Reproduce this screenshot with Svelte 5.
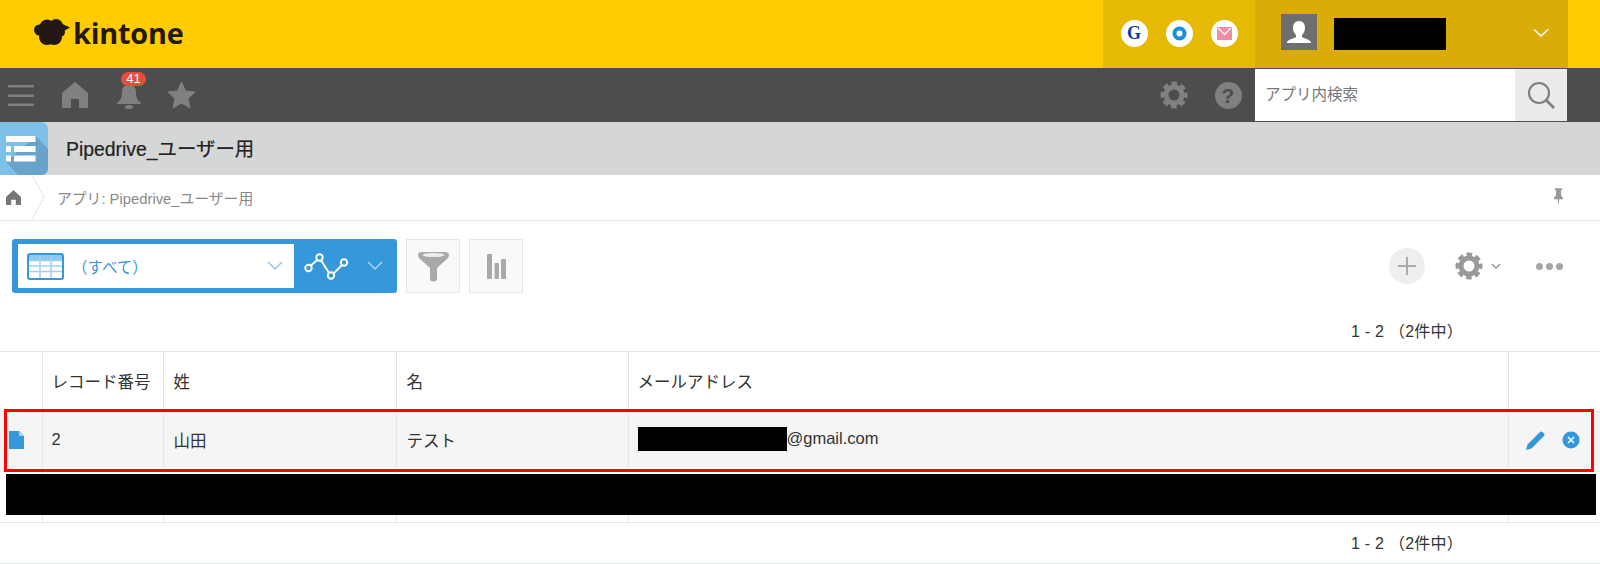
<script>
  const gray = "#808080";
  const columns = [
    { label: "", width: 42 },
    { label: "レコード番号", width: 121 },
    { label: "姓", width: 233 },
    { label: "名", width: 232 },
    { label: "メールアドレス", width: 880 },
    { label: "", width: 92 },
  ];
</script>

<div class="page">
  <header class="top">
    <div class="logo">
      <svg width="36" height="27" viewBox="0 0 36 27">
        <g fill="#231815">
          <circle cx="5.500" cy="11" r="5.500" />
          <circle cx="13" cy="8" r="7.500" />
          <circle cx="22" cy="7" r="7" />
          <circle cx="26" cy="13" r="5" />
          <circle cx="13" cy="18" r="8" />
          <circle cx="20" cy="18" r="8" />
          <path d="M24 3 L36 8.500 L26 14 Z" />
        </g>
      </svg>
      <span>kintone</span>
    </div>
    <div class="services">
      <div class="service">
        <span class="g">G</span>
      </div>
      <div class="service">
        <svg width="15" height="15" viewBox="0 0 15 15"><circle cx="7.500" cy="7.500" r="5" fill="none" stroke="#1a8fd6" stroke-width="4" /></svg>
      </div>
      <div class="service">
        <svg width="15" height="13" viewBox="0 0 15 13">
          <rect width="15" height="13" fill="#ef8ca2" />
          <path d="M1 1 L7.500 7.500 L14 1" fill="none" stroke="#fff" stroke-width="1.200" />
        </svg>
      </div>
    </div>
    <div class="user">
      <div class="avatar">
        <svg width="30" height="30" viewBox="0 0 30 30">
          <path d="M15 4c-4 0-6 3-6 7 0 3 1.500 5.500 3 7v2c-2 1.500-7 2-9 5v1h24v-1c-2-3-7-3.500-9-5v-2c1.500-1.500 3-4 3-7 0-4-2-7-6-7z" fill="#fff" />
        </svg>
      </div>
      <div class="name-mask"></div>
      <svg class="user-chev" width="16" height="10" viewBox="0 0 16 10"><path d="M1 1.500 L8 8 L15 1.500" fill="none" stroke="#fff" stroke-width="1.500" /></svg>
    </div>
  </header>

  <nav class="bar">
    <div class="menu">
      <svg width="26" height="21" viewBox="0 0 26 21">
        <g fill={gray}><rect y="0" width="26" height="2.500" rx="1" /><rect y="9.500" width="26" height="2.500" rx="1" /><rect y="18.500" width="26" height="2.500" rx="1" /></g>
      </svg>
    </div>
    <div class="nav-icon">
      <svg width="26" height="26" viewBox="0 0 26 26"><path d="M13 0 L26 11 V24.500 Q26 26 24.500 26 H17 V17 H9 V26 H1.500 Q0 26 0 24.500 V11 Z" fill={gray} /></svg>
    </div>
    <div class="nav-icon bell">
      <svg width="24" height="28" viewBox="0 0 24 28">
        <path d="M12 2c1.500 0 2 1 2 2 4 1 5 4 5 8 0 5 2 8 5 10v1H0v-1c3-2 5-5 5-10 0-4 1-7 5-8 0-1 .5-2 2-2z" fill={gray} />
        <ellipse cx="12" cy="26" rx="4" ry="2" fill={gray} />
      </svg>
      <span class="badge">41</span>
    </div>
    <div class="nav-icon star">
      <svg width="27" height="26" viewBox="0 0 27 26"><path d="M13.500 0 L17.500 9 L27 10 L20 16.500 L22 26 L13.500 21 L5 26 L7 16.500 L0 10 L9.500 9 Z" fill={gray} stroke={gray} stroke-linejoin="round" /></svg>
    </div>
    <div class="nav-icon push">
      <svg width="28" height="28" viewBox="-14 -14 28 28">
        <circle r="8" fill="none" stroke={gray} stroke-width="5" />
        <circle r="11.500" fill="none" stroke={gray} stroke-width="4" stroke-dasharray="5.500 3.530" stroke-dashoffset="2.750" />
      </svg>
    </div>
    <div class="nav-icon">
      <div class="help">?</div>
    </div>
    <div class="search">
      <div class="search-text">アプリ内検索</div>
      <div class="search-btn">
        <svg width="28" height="28" viewBox="0 0 28 28">
          <circle cx="12" cy="12" r="10" fill="none" stroke="#808080" stroke-width="2.200" />
          <path d="M19 19 L27 27" stroke="#808080" stroke-width="2.600" />
        </svg>
      </div>
    </div>
  </nav>

  <div class="app-title">
    <svg width="48" height="53" viewBox="0 0 48 53">
      <rect x="-8" width="56" height="53" rx="7" fill="#7dc1e8" />
      <path d="M36 14 L48 27 V46 Q48 53 41 53 H18 L6 40 Z" fill="#6aa3ca" />
      <g fill="#fff">
        <rect x="6" y="14" width="29.500" height="6" />
        <rect x="6" y="24" width="5" height="6" />
        <rect x="14" y="24" width="21.500" height="6" />
        <rect x="6" y="33.500" width="5" height="6" />
        <rect x="14" y="33.500" width="21.500" height="6" />
      </g>
    </svg>
    <h1>Pipedrive_ユーザー用</h1>
  </div>

  <div class="crumbs">
    <div class="crumb-home">
      <svg width="15" height="15" viewBox="0 0 26 26"><path d="M13 0 L26 12 V26 H17 V17 H9 V26 H0 V12 Z" fill="#777" /></svg>
      <svg class="crumb-sep" width="13" height="45" viewBox="0 0 13 45"><path d="M0 0 L12 22 L0 45" fill="none" stroke="#e0e4e5" /></svg>
    </div>
    <span class="crumb-text">アプリ: Pipedrive_ユーザー用</span>
    <svg class="pin" width="11" height="19" viewBox="0 0 12 20">
      <path d="M2 0 H10 V2 H8.500 L9 8 L11 10.500 V12 H6.800 L6 19 L5.200 12 H1 V10.500 L3 8 L3.500 2 H2 Z" fill="#999" />
    </svg>
  </div>

  <div class="toolbar">
    <div class="view-select">
      <div class="view-field">
        <svg width="37" height="27" viewBox="0 0 37 27">
          <rect x="1" y="1" width="35" height="25" rx="2" fill="#fff" stroke="#3498db" stroke-width="2" />
          <rect x="1" y="1" width="35" height="6" fill="#3498db" opacity=".55" />
          <g stroke="#9fd0f0" stroke-width="1.500"><path d="M2 7.500H35M2 13H35M2 18.500H35M13 2V25M24 2V25" /></g>
        </svg>
        <span class="view-name">（すべて）</span>
        <svg class="view-chev" width="16" height="10" viewBox="0 0 16 10"><path d="M1 1 L8 8 L15 1" fill="none" stroke="#8fc6ec" stroke-width="1.500" /></svg>
      </div>
      <div class="view-graph">
        <svg width="46" height="32" viewBox="0 0 46 32">
          <path d="M4 18 L15.500 8 L27 26 L40 13" fill="none" stroke="#fff" stroke-width="2" />
          <g fill="#3498db" stroke="#fff" stroke-width="2">
            <circle cx="4.500" cy="18" r="3.200" />
            <circle cx="15.500" cy="7.500" r="3.200" />
            <circle cx="27" cy="25.500" r="3.200" />
            <circle cx="40" cy="12.500" r="3.200" />
          </g>
        </svg>
        <svg width="16" height="10" viewBox="0 0 16 10"><path d="M1 1 L8 8 L15 1" fill="none" stroke="#a8d4f2" stroke-width="1.500" /></svg>
      </div>
    </div>
    <div class="tool-btn">
      <svg width="31" height="31" viewBox="0 0 31 31">
        <path d="M0 4 Q0 1 4 1 H27 Q31 1 31 4 Q31 6 29 8 L19 17 V29 Q15.500 32 12 29 V17 L2 8 Q0 6 0 4 Z" fill="#a9a9a9" />
        <ellipse cx="15.500" cy="4" rx="11" ry="2" fill="#eceded" />
      </svg>
    </div>
    <div class="tool-btn">
      <svg width="19" height="25" viewBox="0 0 19 25"><g fill="#a9a9a9"><rect width="5" height="25" rx="1" /><rect x="7.500" y="9" width="4.500" height="16" rx="1" /><rect x="14" y="5" width="5" height="20" rx="1" /></g></svg>
    </div>
    <div class="tool-right">
      <div class="add">
        <svg width="20" height="20" viewBox="0 0 20 20"><path d="M10 1V19M1 10H19" stroke="#aaa" stroke-width="2" /></svg>
      </div>
      <svg class="gear" width="28" height="28" viewBox="-14 -14 28 28">
        <circle r="8" fill="none" stroke="#999" stroke-width="5" />
        <circle r="11.500" fill="none" stroke="#999" stroke-width="4" stroke-dasharray="5.500 3.530" stroke-dashoffset="2.750" />
      </svg>
      <svg class="gear-chev" width="10" height="7" viewBox="0 0 10 7"><path d="M1 1 L5 5 L9 1" fill="none" stroke="#999" stroke-width="1.500" /></svg>
      <div class="dots"><i></i><i></i><i></i></div>
    </div>
  </div>

  <div class="count">1 - 2 （2件中）</div>

  <div class="table-wrap">
    <table>
      <colgroup>
        {#each columns as col}
          <col style="width: {col.width}px" />
        {/each}
      </colgroup>
      <thead>
        <tr>
          {#each columns as col}
            <th>{col.label}</th>
          {/each}
        </tr>
      </thead>
      <tbody>
        <tr class="selected">
          <td class="doc">
            <svg width="15" height="18" viewBox="0 0 15 18"><path d="M0 0 H10 L15 5 V18 H0 Z" fill="#3498db" /><path d="M10 0 L15 5 H10 Z" fill="#a8d4f2" /></svg>
          </td>
          <td>2</td>
          <td>山田</td>
          <td>テスト</td>
          <td><span class="mail-mask"></span>@gmail.com</td>
          <td class="row-actions">
            <svg width="20" height="20" viewBox="0 0 20 20"><path d="M0 20 L1.500 14.500 L14 2 Q15 1 16.500 2 L18 3.500 Q19 5 18 6 L5.500 18.500 Z" fill="#3498db" /></svg>
            <svg width="18" height="18" viewBox="0 0 18 18"><circle cx="9" cy="9" r="8.500" fill="#3498db" /><path d="M6 6 L12 12 M12 6 L6 12" stroke="#fff" stroke-width="1.500" /></svg>
          </td>
        </tr>
        <tr class="hidden-row">
          <td></td><td></td><td></td><td></td><td></td><td></td>
        </tr>
      </tbody>
    </table>
    <div class="highlight"></div>
    <div class="row-mask"></div>
  </div>

  <div class="count bottom">1 - 2 （2件中）</div>
</div>

<style>
  :global(body) {
    margin: 0;
    background: #fff;
  }
  .page {
    width: 1600px;
    height: 564px;
    overflow: hidden;
    font-family: "Liberation Sans", "Noto Sans CJK JP", sans-serif;
    color: #333;
  }
  .top {
    height: 68px;
    background: #ffcc00;
    display: flex;
  }
  .logo {
    display: flex;
    align-items: center;
    gap: 3px;
    padding: 0 0 3px 34px;
    margin-right: auto;
    font-family: "Open Sans", sans-serif;
    font-weight: 700;
    font-size: 28.800px;
    letter-spacing: -0.2px;
    color: #231815;
  }
  .services {
    width: 152px;
    box-sizing: border-box;
    padding-bottom: 2px;
    background: #e6b905;
    display: flex;
    align-items: center;
    justify-content: center;
    gap: 18px;
  }
  .service {
    width: 27px;
    height: 27px;
    border-radius: 50%;
    background: #fff;
    display: flex;
    align-items: center;
    justify-content: center;
  }
  .g {
    font-family: "Liberation Serif", serif;
    font-weight: 700;
    font-size: 18px;
    color: #0b3b9c;
  }
  .user {
    width: 313px;
    margin-right: 32px;
    background: #d9ac0a;
    display: flex;
    align-items: center;
    padding-left: 26px;
    box-sizing: border-box;
  }
  .avatar {
    width: 36px;
    height: 36px;
    background: #6e6e6e;
    display: flex;
    align-items: center;
    justify-content: center;
    margin-top: -4px;
  }
  .name-mask {
    width: 112px;
    height: 32px;
    background: #000;
    margin-left: 17px;
    margin-top: -1px;
  }
  .user-chev {
    margin-left: 87px;
    margin-top: -3px;
  }
  .bar {
    height: 54px;
    background: #4d4d4d;
    display: flex;
    align-items: center;
  }
  .menu {
    width: 48px;
    box-sizing: border-box;
    padding-left: 8px;
    display: flex;
  }
  .nav-icon {
    width: 54px;
    display: flex;
    justify-content: center;
    position: relative;
  }
  .star {
    margin-left: -2px;
  }
  .push {
    margin-left: auto;
  }
  .badge {
    position: absolute;
    top: -9px;
    left: 19px;
    width: 25px;
    height: 14px;
    border-radius: 7px;
    background: #e74c3c;
    color: #fff;
    font-size: 13px;
    line-height: 14px;
    text-align: center;
  }
  .help {
    width: 27px;
    height: 27px;
    border-radius: 50%;
    background: #808080;
    color: #4d4d4d;
    font-weight: 700;
    font-size: 21px;
    line-height: 27px;
    text-align: center;
  }
  .search {
    width: 312px;
    height: 52px;
    margin-right: 33px;
    background: #fff;
    display: flex;
  }
  .search-text {
    flex: 1;
    padding-left: 10px;
    font-size: 15.500px;
    line-height: 52px;
    color: #777;
  }
  .search-btn {
    width: 52px;
    background: #ebebeb;
    display: flex;
    align-items: center;
    justify-content: center;
  }
  .app-title {
    height: 53px;
    background: #d5d7d6;
    display: flex;
    align-items: center;
  }
  .app-title h1 {
    margin: -3px 0 0 18px;
    font-size: 19.400px;
    font-weight: 400;
    color: #222;
    -webkit-text-stroke: 0.2px #222;
  }
  .crumbs {
    height: 45px;
    border-bottom: 1px solid #e3e7e8;
    display: flex;
    align-items: center;
  }
  .crumb-home {
    width: 45px;
    height: 45px;
    box-sizing: border-box;
    padding-left: 6px;
    display: flex;
    align-items: center;
    position: relative;
  }
  .crumb-sep {
    position: absolute;
    left: 32px;
    top: 0;
  }
  .crumb-text {
    margin: -1px 0 0 12px;
    font-size: 14.800px;
    color: #888;
  }
  .pin {
    margin-left: auto;
    margin-right: 36px;
  }
  .toolbar {
    height: 56px;
    padding: 18px 0 0 12px;
    display: flex;
  }
  .view-select {
    width: 385px;
    height: 54px;
    box-sizing: border-box;
    background: #3498db;
    border-radius: 3px;
    padding: 5px 0 5px 6px;
    display: flex;
  }
  .view-field {
    width: 276px;
    background: #fff;
    display: flex;
    align-items: center;
    padding-left: 9px;
    box-sizing: border-box;
  }
  .view-name {
    margin: 0 0 0 8px;
    font-size: 15.500px;
    color: #3498db;
  }
  .view-chev {
    margin-left: auto;
    margin-right: 11px;
  }
  .view-graph {
    display: flex;
    align-items: center;
    padding-left: 10px;
    gap: 17px;
  }
  .tool-btn {
    width: 54px;
    height: 54px;
    margin-left: 9px;
    box-sizing: border-box;
    border: 1px solid #e3e7e8;
    background: #f7f9fa;
    display: flex;
    align-items: center;
    justify-content: center;
  }
  .tool-right {
    margin-left: auto;
    display: flex;
    align-items: center;
    height: 54px;
    padding-right: 37px;
  }
  .add {
    width: 36px;
    height: 36px;
    border-radius: 50%;
    background: #eee;
    display: flex;
    align-items: center;
    justify-content: center;
  }
  .gear {
    margin-left: 30px;
  }
  .gear-chev {
    margin-left: 8px;
  }
  .dots {
    display: flex;
    gap: 3px;
    margin-left: 35px;
  }
  .dots i {
    width: 7px;
    height: 7px;
    border-radius: 50%;
    background: #a5a5a5;
  }
  .count {
    height: 56px;
    padding: 0 0 0 1351px;
    box-sizing: border-box;
    font-size: 16px;
    letter-spacing: 0.25px;
    line-height: 74px;
    color: #333;
  }
  .table-wrap {
    position: relative;
    height: 171px;
  }
  table {
    width: 1600px;
    table-layout: fixed;
    border-collapse: collapse;
    font-size: 16.500px;
    color: #333;
  }
  th,
  td {
    border: 1px solid #e3e7e8;
    border-width: 1px 0 1px 1px;
    padding: 0 0 0 10px;
    text-align: left;
    font-weight: 400;
  }
  th:nth-child(2),
  td:nth-child(2),
  th:nth-child(5),
  td:nth-child(5) {
    padding-left: 9px;
  }
  th:first-child,
  td:first-child {
    border-left: none;
  }
  th {
    height: 57px;
    padding-bottom: 2px;
  }
  .selected td {
    height: 55px;
    padding-bottom: 4px;
    background: #f5f5f5;
  }
  .selected td.doc {
    padding: 0 0 4px 9px;
    line-height: 0;
  }
  .mail-mask {
    display: inline-block;
    width: 149px;
    height: 24px;
    margin-top: -2px;
    background: #000;
    vertical-align: middle;
  }
  .selected td.row-actions {
    padding-left: 17px;
  }
  .row-actions svg {
    vertical-align: middle;
  }
  .row-actions svg + svg {
    margin-left: 12px;
  }
  .hidden-row td {
    height: 50px;
  }
  .highlight {
    position: absolute;
    left: 4px;
    top: 58px;
    width: 1590px;
    height: 63px;
    box-sizing: border-box;
    border: 3px solid #f00;
  }
  .row-mask {
    position: absolute;
    left: 6px;
    top: 123px;
    width: 1590px;
    height: 41px;
    background: #000;
  }
  .bottom {
    height: 42px;
    line-height: 44px;
    border-bottom: 1px solid #e3e7e8;
  }
</style>
